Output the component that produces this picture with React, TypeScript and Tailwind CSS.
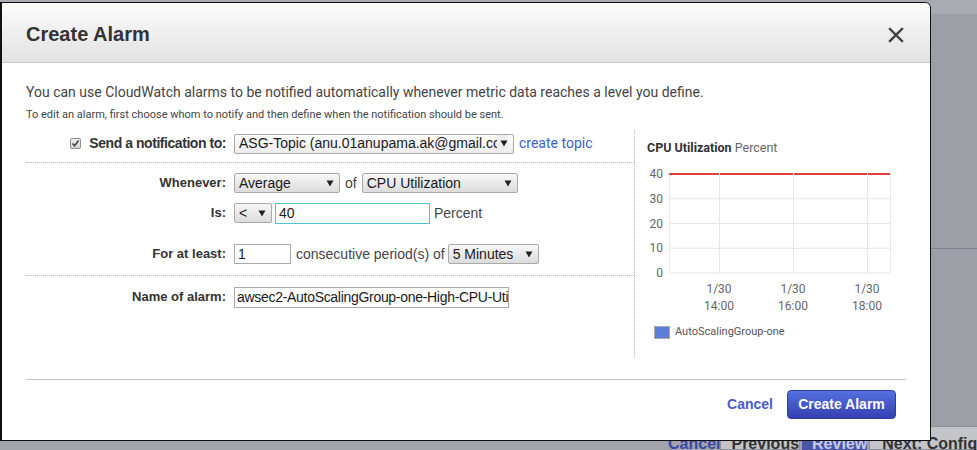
import React from "react";

function Arrow() {
  return (
    <svg width="8" height="7" viewBox="0 0 8 7" className="shrink-0">
      <path d="M0.5 0.5 L7.5 0.5 L4 6.5 Z" fill="#222" />
    </svg>
  );
}

function Select({ className, text }: { className: string; text: string }) {
  return (
    <div
      className={
        "flex items-center justify-between h-[20px] border border-[#a9a9a9] rounded-[2px] bg-gradient-to-b from-[#f7f7f7] to-[#dcdcdc] pl-[4px] pr-[5px] text-[14px] text-[#1a1a1a] overflow-hidden whitespace-nowrap " +
        className
      }
    >
      <span className="overflow-hidden">{text}</span>
      <Arrow />
    </div>
  );
}

function Label({ children }: { children: React.ReactNode }) {
  return (
    <div className="w-[208px] shrink-0 flex items-center justify-end gap-[8px] pr-[8px] text-[13px] font-bold text-[#333]">
      {children}
    </div>
  );
}

function Chart() {
  const ys = [12, 36.75, 61.5, 86.25, 111];
  const ylabels = ["40", "30", "20", "10", "0"];
  const xs = [72, 146, 220];
  const xl = ["14:00", "16:00", "18:00"];
  return (
    <svg width="258" height="150" viewBox="0 0 258 150" className="block">
      {ys.map((y, i) => (
        <line key={"h" + i} x1="22" x2="243" y1={y} y2={y} stroke="#e6e6e6" strokeWidth="1" />
      ))}
      <line x1="22.5" x2="22.5" y1="12" y2="111" stroke="#e6e6e6" />
      {xs.map((x, i) => (
        <line key={"v" + i} x1={x + 0.5} x2={x + 0.5} y1="10" y2="111" stroke="#e6e6e6" />
      ))}
      <line x1="243.5" x2="243.5" y1="10" y2="111" stroke="#e6e6e6" />
      <line x1="22" x2="243" y1="12" y2="12" stroke="#dd0000" strokeWidth="1.4" />
      {xs.map((x, i) => (
        <line key={"g" + i} x1={x + 0.5} x2={x + 0.5} y1="10.5" y2="13.5" stroke="#ffffff" strokeWidth="1" />
      ))}
      {ylabels.map((l, i) => (
        <text key={"yl" + i} x="16" y={ys[i] + 4} textAnchor="end" fontSize="12" fill="#666" fontFamily="Roboto, sans-serif">
          {l}
        </text>
      ))}
      {xs.map((x, i) => (
        <g key={"xl" + i}>
          <text x={x} y="131" textAnchor="middle" fontSize="12" fill="#666" fontFamily="Roboto, sans-serif">
            1/30
          </text>
          <text x={x} y="148" textAnchor="middle" fontSize="12" fill="#666" fontFamily="Roboto, sans-serif">
            {xl[i]}
          </text>
        </g>
      ))}
    </svg>
  );
}

export default function App() {
  return (
    <div className="relative w-[977px] h-[450px] overflow-hidden bg-[#9c9fa6] font-['Liberation_Sans',Arial,sans-serif]">
      {/* background page */}
      <div className="absolute left-0 top-0 w-[977px] h-[14px] bg-[#a8abb1]" />
      <div className="absolute left-[930px] top-[248px] w-[47px] h-px bg-[#7f828a]" />
      <div className="absolute left-0 top-[426px] w-[977px] h-[24px] bg-[#a1a4aa] flex items-start text-[16px] font-bold">
        <div className="ml-[668px] w-[58px] pt-[6px] text-[#3a48a8]">Cancel</div>
        <div className="w-[84px] h-[24px] border border-[#8d9096] bg-[#c3c5c9] text-[#333] pt-[5px] pl-[10px]">Previous</div>
        <div className="w-[70px] h-[24px] bg-[#4b55a6] text-[#c9ccec] pt-[6px] pl-[10px] ml-[2px]">Review</div>
        <div className="flex-1 h-[24px] border border-[#8d9096] bg-[#c3c5c9] text-[#333] pt-[5px] pl-[12px] ml-[2px] whitespace-nowrap">Next: Config</div>
      </div>

      {/* dialog */}
      <div className="absolute left-0 top-[2px] w-[931px] h-[439px] bg-white border border-[#111] border-l-2 rounded-tr-[6px] overflow-hidden flex flex-col">
        <div className="h-[60px] shrink-0 bg-gradient-to-b from-[#fcfcfc] to-[#e2e2e2] border-b border-[#c8c8c8] flex items-center justify-between pl-[24px] pr-[26px]">
          <div className="text-[20px] font-bold text-[#333] pt-[2px]">Create Alarm</div>
          <svg width="16" height="16" viewBox="0 0 16 16" className="mt-[4px]">
            <path d="M2 2 L14 14 M14 2 L2 14" stroke="#404040" strokeWidth="2.4" strokeLinecap="square" />
          </svg>
        </div>

        <div className="flex-1 flex flex-col pl-[24px] pr-[24px]">
          <div className="pt-[19px] text-[14px] leading-[20px] text-[#444] font-['Roboto',sans-serif] whitespace-nowrap">
            You can use CloudWatch alarms to be notified automatically whenever metric data reaches a level you define.
          </div>
          <div className="mt-[6px] text-[11px] leading-[14px] text-[#444] font-['Roboto',sans-serif] whitespace-nowrap">
            To edit an alarm, first choose whom to notify and then define when the notification should be sent.
          </div>

          <div className="mt-[8px] h-[227px] flex">
            {/* form */}
            <div className="w-[608px] shrink-0 flex flex-col">
              <div className="h-[33px] pb-[5px] flex items-center border-b border-dotted border-[#b5b5b5]">
                <Label>
                  <span className="w-[11px] h-[11px] border border-[#8f8f8f] rounded-[2px] bg-gradient-to-b from-[#f0f0f0] to-[#d4d4d4] flex items-center justify-center">
                    <svg width="9" height="9" viewBox="0 0 9 9">
                      <path d="M1.5 4.5 L3.6 6.8 L7.6 1.6" stroke="#444" strokeWidth="1.6" fill="none" />
                    </svg>
                  </span>
                  <span className="text-[14px] tracking-[-0.45px]">Send a notification to:</span>
                </Label>
                <div className="w-[280px] h-[20px] flex items-center justify-between border border-[#a9a9a9] rounded-[2px] bg-gradient-to-b from-[#fdfdfd] to-[#ececec] pl-[4px] pr-[5px] text-[14px] text-[#1a1a1a] overflow-hidden whitespace-nowrap">
                  <span className="overflow-hidden">ASG-Topic (anu.01anupama.ak@gmail.com)</span>
                  <span className="pl-[3px] bg-[#eeeeee] flex items-center h-full">
                    <Arrow />
                  </span>
                </div>
                <span className="ml-[5px] text-[14px] text-[#3b62c9] font-['Roboto',sans-serif]">create topic</span>
              </div>

              <div className="h-[113px] flex flex-col border-b border-dotted border-[#b5b5b5]">
                <div className="mt-[10px] h-[20px] flex items-center">
                  <Label>Whenever:</Label>
                  <Select className="w-[106px]" text="Average" />
                  <span className="mx-[5px] text-[14px] text-[#444]">of</span>
                  <Select className="w-[156px]" text="CPU Utilization" />
                </div>
                <div className="mt-[10px] h-[20px] flex items-center">
                  <Label>Is:</Label>
                  <Select className="w-[38px]" text="<" />
                  <div className="ml-[3px] w-[155px] h-[21px] border border-[#4fc0d6] bg-white pl-[3px] text-[14px] text-[#1a1a1a] flex items-center">40</div>
                  <span className="ml-[4px] text-[14px] text-[#444]">Percent</span>
                </div>
                <div className="mt-[21px] h-[20px] flex items-center">
                  <Label>For at least:</Label>
                  <div className="w-[57px] h-[20px] border border-[#a9a9a9] bg-white pl-[3px] text-[14px] text-[#1a1a1a] flex items-center">1</div>
                  <span className="ml-[5px] mr-[3px] text-[14px] text-[#444] whitespace-nowrap">consecutive period(s) of</span>
                  <Select className="w-[91px]" text="5 Minutes" />
                </div>
              </div>

              <div className="mt-[11px] h-[20px] flex items-center">
                <Label>Name of alarm:</Label>
                <div className="w-[275px] h-[21px] border border-[#a9a9a9] bg-white pl-[2px] text-[14px] text-[#1a1a1a] flex items-center overflow-hidden whitespace-nowrap tracking-[-0.3px]">
                  awsec2-AutoScalingGroup-one-High-CPU-Utilization
                </div>
              </div>
            </div>

            {/* chart panel */}
            <div className="flex-1 border-l border-dotted border-[#b5b5b5] pl-[12px] flex flex-col font-['Roboto',sans-serif]">
              <div className="pt-[11px] text-[12.5px] leading-[14px] whitespace-nowrap">
                <span className="font-bold text-[#333]">CPU Utilization</span>
                <span className="text-[#666]"> Percent</span>
              </div>
              <div className="mt-[7px]">
                <Chart />
              </div>
              <div className="mt-[12px] ml-[7px] flex items-center gap-[5px]">
                <span className="w-[16px] h-[13px] border border-[#aaa] bg-[#5b7fd9]" />
                <span className="text-[11px] text-[#555]">AutoScalingGroup-one</span>
              </div>
            </div>
          </div>

          <div className="mt-[22px] h-px bg-[#c2c2c2]" />
          <div className="mt-[10px] flex items-center justify-end pr-[10px] gap-[14px]">
            <span className="text-[14px] font-bold text-[#4a5ad0]">Cancel</span>
            <div className="w-[109px] h-[29px] rounded-[4px] border border-[#2f3b9e] bg-gradient-to-b from-[#5470df] to-[#3640b2] flex items-center justify-center text-[14px] font-bold text-white">
              Create Alarm
            </div>
          </div>
        </div>
      </div>
    </div>
  );
}
